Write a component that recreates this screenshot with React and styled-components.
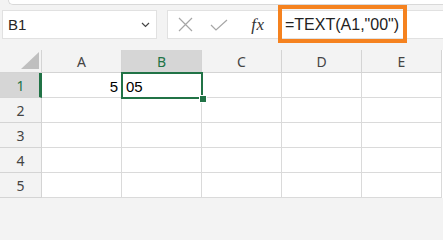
import React from "react";
import styled, { createGlobalStyle } from "styled-components";

const GlobalStyle = createGlobalStyle`
  html, body {
    margin: 0;
    padding: 0;
    background: #f3f3f3;
  }
  body {
    font-family: "Liberation Sans", Arial, sans-serif;
  }
`;

const Screen = styled.div`
  width: 443px;
  height: 200px;
  overflow: hidden;
  background: #f3f3f3;
`;

const RibbonEdge = styled.div`
  height: 4px;
  margin-left: 8px;
  background: #ffffff;
  border-left: 1px solid #d9d9d9;
  border-bottom: 1px solid #d9d9d9;
  border-bottom-left-radius: 6px;
`;

const FormulaBar = styled.div`
  position: relative;
  display: flex;
  align-items: stretch;
  gap: 10px;
  height: 29px;
  margin: 5px 0 11px 2px;
`;

const NameBox = styled.div`
  box-sizing: border-box;
  width: 155px;
  display: flex;
  align-items: center;
  justify-content: space-between;
  padding: 0 6px 0 5px;
  background: #ffffff;
  border: 1px solid #e1e1e1;
  font-size: 15px;
  color: #262626;
`;

const FormulaBox = styled.div`
  box-sizing: border-box;
  flex: 1;
  display: flex;
  align-items: center;
  margin-right: -10px;
  background: #ffffff;
  border: 1px solid #e1e1e1;
`;

const IconSlot = styled.div`
  width: ${(p) => p.w}px;
  height: 100%;
  display: flex;
  align-items: center;
  justify-content: center;
  flex-shrink: 0;
`;

const Fx = styled.span`
  font-family: "Liberation Serif", "Times New Roman", serif;
  font-style: italic;
  font-size: 17px;
  color: #333333;
  letter-spacing: 0.5px;
`;

const FormulaText = styled.div`
  padding-left: 5px;
  font-size: 16px;
  color: #222222;
  white-space: nowrap;
`;

const Highlight = styled.div`
  position: absolute;
  left: 276px;
  top: -5px;
  width: 129px;
  height: 38px;
  box-sizing: border-box;
  border: 4px solid #f5821f;
  pointer-events: none;
`;

const Sheet = styled.div`
  display: grid;
  grid-template-columns: 42px repeat(5, 80px);
  grid-template-rows: 23px repeat(5, 25px);
  background: #ffffff;
`;

const Cell = styled.div`
  position: relative;
  box-sizing: border-box;
  display: flex;
  align-items: center;
  justify-content: ${(p) => (p.right ? "flex-end" : "flex-start")};
  padding: 2px 3px 0 4px;
  border-right: 1px solid #dadada;
  border-bottom: 1px solid #dadada;
  font-size: 15px;
  color: #000000;
`;

const ColHead = styled.div`
  box-sizing: border-box;
  display: flex;
  align-items: center;
  justify-content: center;
  background: ${(p) => (p.active ? "#d6d6d6" : "#f3f3f3")};
  border-right: 1px solid #d4d4d4;
  border-bottom: 1px solid #d4d4d4;
  font-family: "Noto Sans", "Open Sans", sans-serif;
  font-size: 14px;
  color: ${(p) => (p.active ? "#217346" : "#444444")};
`;

const RowHead = styled(ColHead)`
  border-right: ${(p) => (p.active ? "3px solid #217346" : "1px solid #d4d4d4")};
  padding-left: ${(p) => (p.active ? "2px" : "0")};
`;

const Corner = styled.div`
  box-sizing: border-box;
  display: flex;
  align-items: flex-end;
  justify-content: flex-end;
  padding: 0 2px 3px 0;
  background: #f3f3f3;
  border-right: 1px solid #d4d4d4;
  border-bottom: 1px solid #d4d4d4;
`;

const Selection = styled.div`
  position: absolute;
  top: -1px;
  left: -1px;
  right: -2px;
  bottom: -2px;
  border: 2px solid #217346;
  z-index: 2;
  pointer-events: none;
`;

const FillHandle = styled.div`
  position: absolute;
  right: -6px;
  bottom: -6px;
  width: 6px;
  height: 6px;
  background: #217346;
  border: 1px solid #ffffff;
`;

const columns = ["A", "B", "C", "D", "E"];
const rows = [1, 2, 3, 4, 5];

const cellValue = (col, row) => {
  if (row === 1 && col === "A") return "5";
  if (row === 1 && col === "B") return "05";
  return "";
};

function App() {
  return (
    <Screen>
      <GlobalStyle />
      <RibbonEdge />
      <FormulaBar>
        <NameBox>
          <span>B1</span>
          <svg width="9" height="6" viewBox="0 0 9 6">
            <path d="M1 1 L4.5 4.5 L8 1" fill="none" stroke="#444" strokeWidth="1.2" />
          </svg>
        </NameBox>
        <FormulaBox>
          <IconSlot w={34}>
            <svg width="15" height="15" viewBox="0 0 15 15">
              <path d="M1 1 L14 14 M14 1 L1 14" stroke="#a6a6a6" strokeWidth="1.2" />
            </svg>
          </IconSlot>
          <IconSlot w={34}>
            <svg width="18" height="12" viewBox="0 0 18 12">
              <path d="M1 6 L6 11 L17 1" fill="none" stroke="#a6a6a6" strokeWidth="1.2" />
            </svg>
          </IconSlot>
          <IconSlot w={44}>
            <Fx>fx</Fx>
          </IconSlot>
          <FormulaText>=TEXT(A1,"00")</FormulaText>
        </FormulaBox>
        <Highlight />
      </FormulaBar>
      <Sheet>
        <Corner>
          <svg width="18" height="17" viewBox="0 0 18 17">
            <path d="M18 0 L18 17 L0 17 Z" fill="#bfbfbf" />
          </svg>
        </Corner>
        {columns.map((c) => (
          <ColHead key={c} active={c === "B"}>
            {c}
          </ColHead>
        ))}
        {rows.map((r) => (
          <React.Fragment key={r}>
            <RowHead active={r === 1}>{r}</RowHead>
            {columns.map((c) => (
              <Cell key={c + r} right={c === "A"}>
                {cellValue(c, r)}
                {c === "B" && r === 1 && (
                  <Selection>
                    <FillHandle />
                  </Selection>
                )}
              </Cell>
            ))}
          </React.Fragment>
        ))}
      </Sheet>
    </Screen>
  );
}

export default App;
